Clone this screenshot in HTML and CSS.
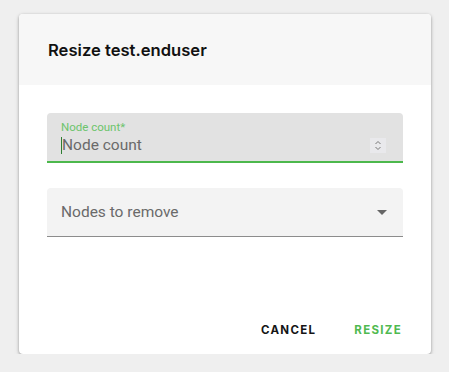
FILE: index.html
```html
<!DOCTYPE html>
<html>
<head>
<meta charset="utf-8">
<link rel="stylesheet" href="styles.css">
</head>
<body>
<div class="dialog">
  <div class="dialog-header">
    <h2 class="dialog-title">Resize test.enduser</h2>
  </div>
  <div class="dialog-body">
    <div class="field field-focused">
      <label class="field-label">Node count*</label>
      <div class="field-row">
        <span class="caret"></span><span class="field-placeholder">Node count</span>
        <svg class="spinner" width="16" height="15" viewBox="0 0 16 15">
          <rect x="0" y="0" width="16" height="15" fill="#e9e9ec"/>
          <path d="M5.5 6 L8 3.5 L10.5 6" fill="none" stroke="#777" stroke-width="1"/>
          <path d="M5.5 9 L8 11.5 L10.5 9" fill="none" stroke="#777" stroke-width="1"/>
        </svg>
      </div>
    </div>
    <div class="field field-select">
      <span class="field-placeholder">Nodes to remove</span>
      <svg class="arrow" width="10" height="5" viewBox="0 0 10 5">
        <path d="M0 0 L10 0 L5 5 Z" fill="#666"/>
      </svg>
    </div>
  </div>
  <div class="dialog-actions">
    <button class="btn btn-cancel">CANCEL</button>
    <button class="btn btn-primary">RESIZE</button>
  </div>
</div>
</body>
</html>
```

FILE: styles.css
```css
html, body {
  margin: 0;
  padding: 0;
  background: #efefef;
  font-family: Roboto, "Liberation Sans", sans-serif;
}
body {
  padding: 14px 0 0 19px;
}
.dialog {
  width: 412px;
  height: 340px;
  background: #fff;
  border-radius: 4px;
  box-shadow: 0 1px 3px rgba(0,0,0,0.35), 0 2px 6px rgba(0,0,0,0.08);
  display: flex;
  flex-direction: column;
  overflow: hidden;
}
.dialog-header {
  height: 71px;
  background: #f7f7f7;
  display: flex;
  align-items: center;
  padding-left: 29px;
  box-sizing: border-box;
}
.dialog-title {
  margin: 0;
  font-family: Inter, "Open Sans", sans-serif;
  font-weight: 600;
  font-size: 16.6px;
  color: #111;
  letter-spacing: 0;
}
.dialog-body {
  padding: 28px 28px 0 28px;
  display: flex;
  flex-direction: column;
  gap: 25px;
  flex: 1;
}
.field {
  box-sizing: border-box;
  border-radius: 4px 4px 0 0;
  padding: 0 14px;
}
.field-focused {
  height: 50px;
  background: #e2e2e2;
  border-bottom: 2px solid #4cb84c;
  display: flex;
  flex-direction: column;
  padding-top: 8px;
}
.field-label {
  font-size: 11.5px;
  color: #6cc46c;
  line-height: 13px;
}
.field-row {
  display: flex;
  align-items: center;
  margin-top: 1px;
  height: 20px;
}
.caret {
  width: 1px;
  height: 17px;
  background: #2e7d32;
}
.field-placeholder {
  font-size: 15.5px;
  color: #6a6a6a;
  flex: 1;
}
.spinner {
  margin-right: 3px;
}
.field-select {
  height: 49px;
  background: #f3f3f3;
  border-bottom: 1px solid #8c8c8c;
  display: flex;
  align-items: center;
}
.arrow {
  margin-right: 2px;
  margin-top: 1px;
}
.dialog-actions {
  display: flex;
  justify-content: flex-end;
  align-items: center;
  gap: 38px;
  padding: 0 29px 17px 0;
}
.btn {
  border: none;
  background: none;
  padding: 0;
  font-family: Inter, "Open Sans", sans-serif;
  font-weight: 700;
  font-size: 11.5px;
  letter-spacing: 1.3px;
  cursor: pointer;
}
.btn-cancel {
  color: #151515;
}
.btn-primary {
  color: #4fba4f;
}
```
